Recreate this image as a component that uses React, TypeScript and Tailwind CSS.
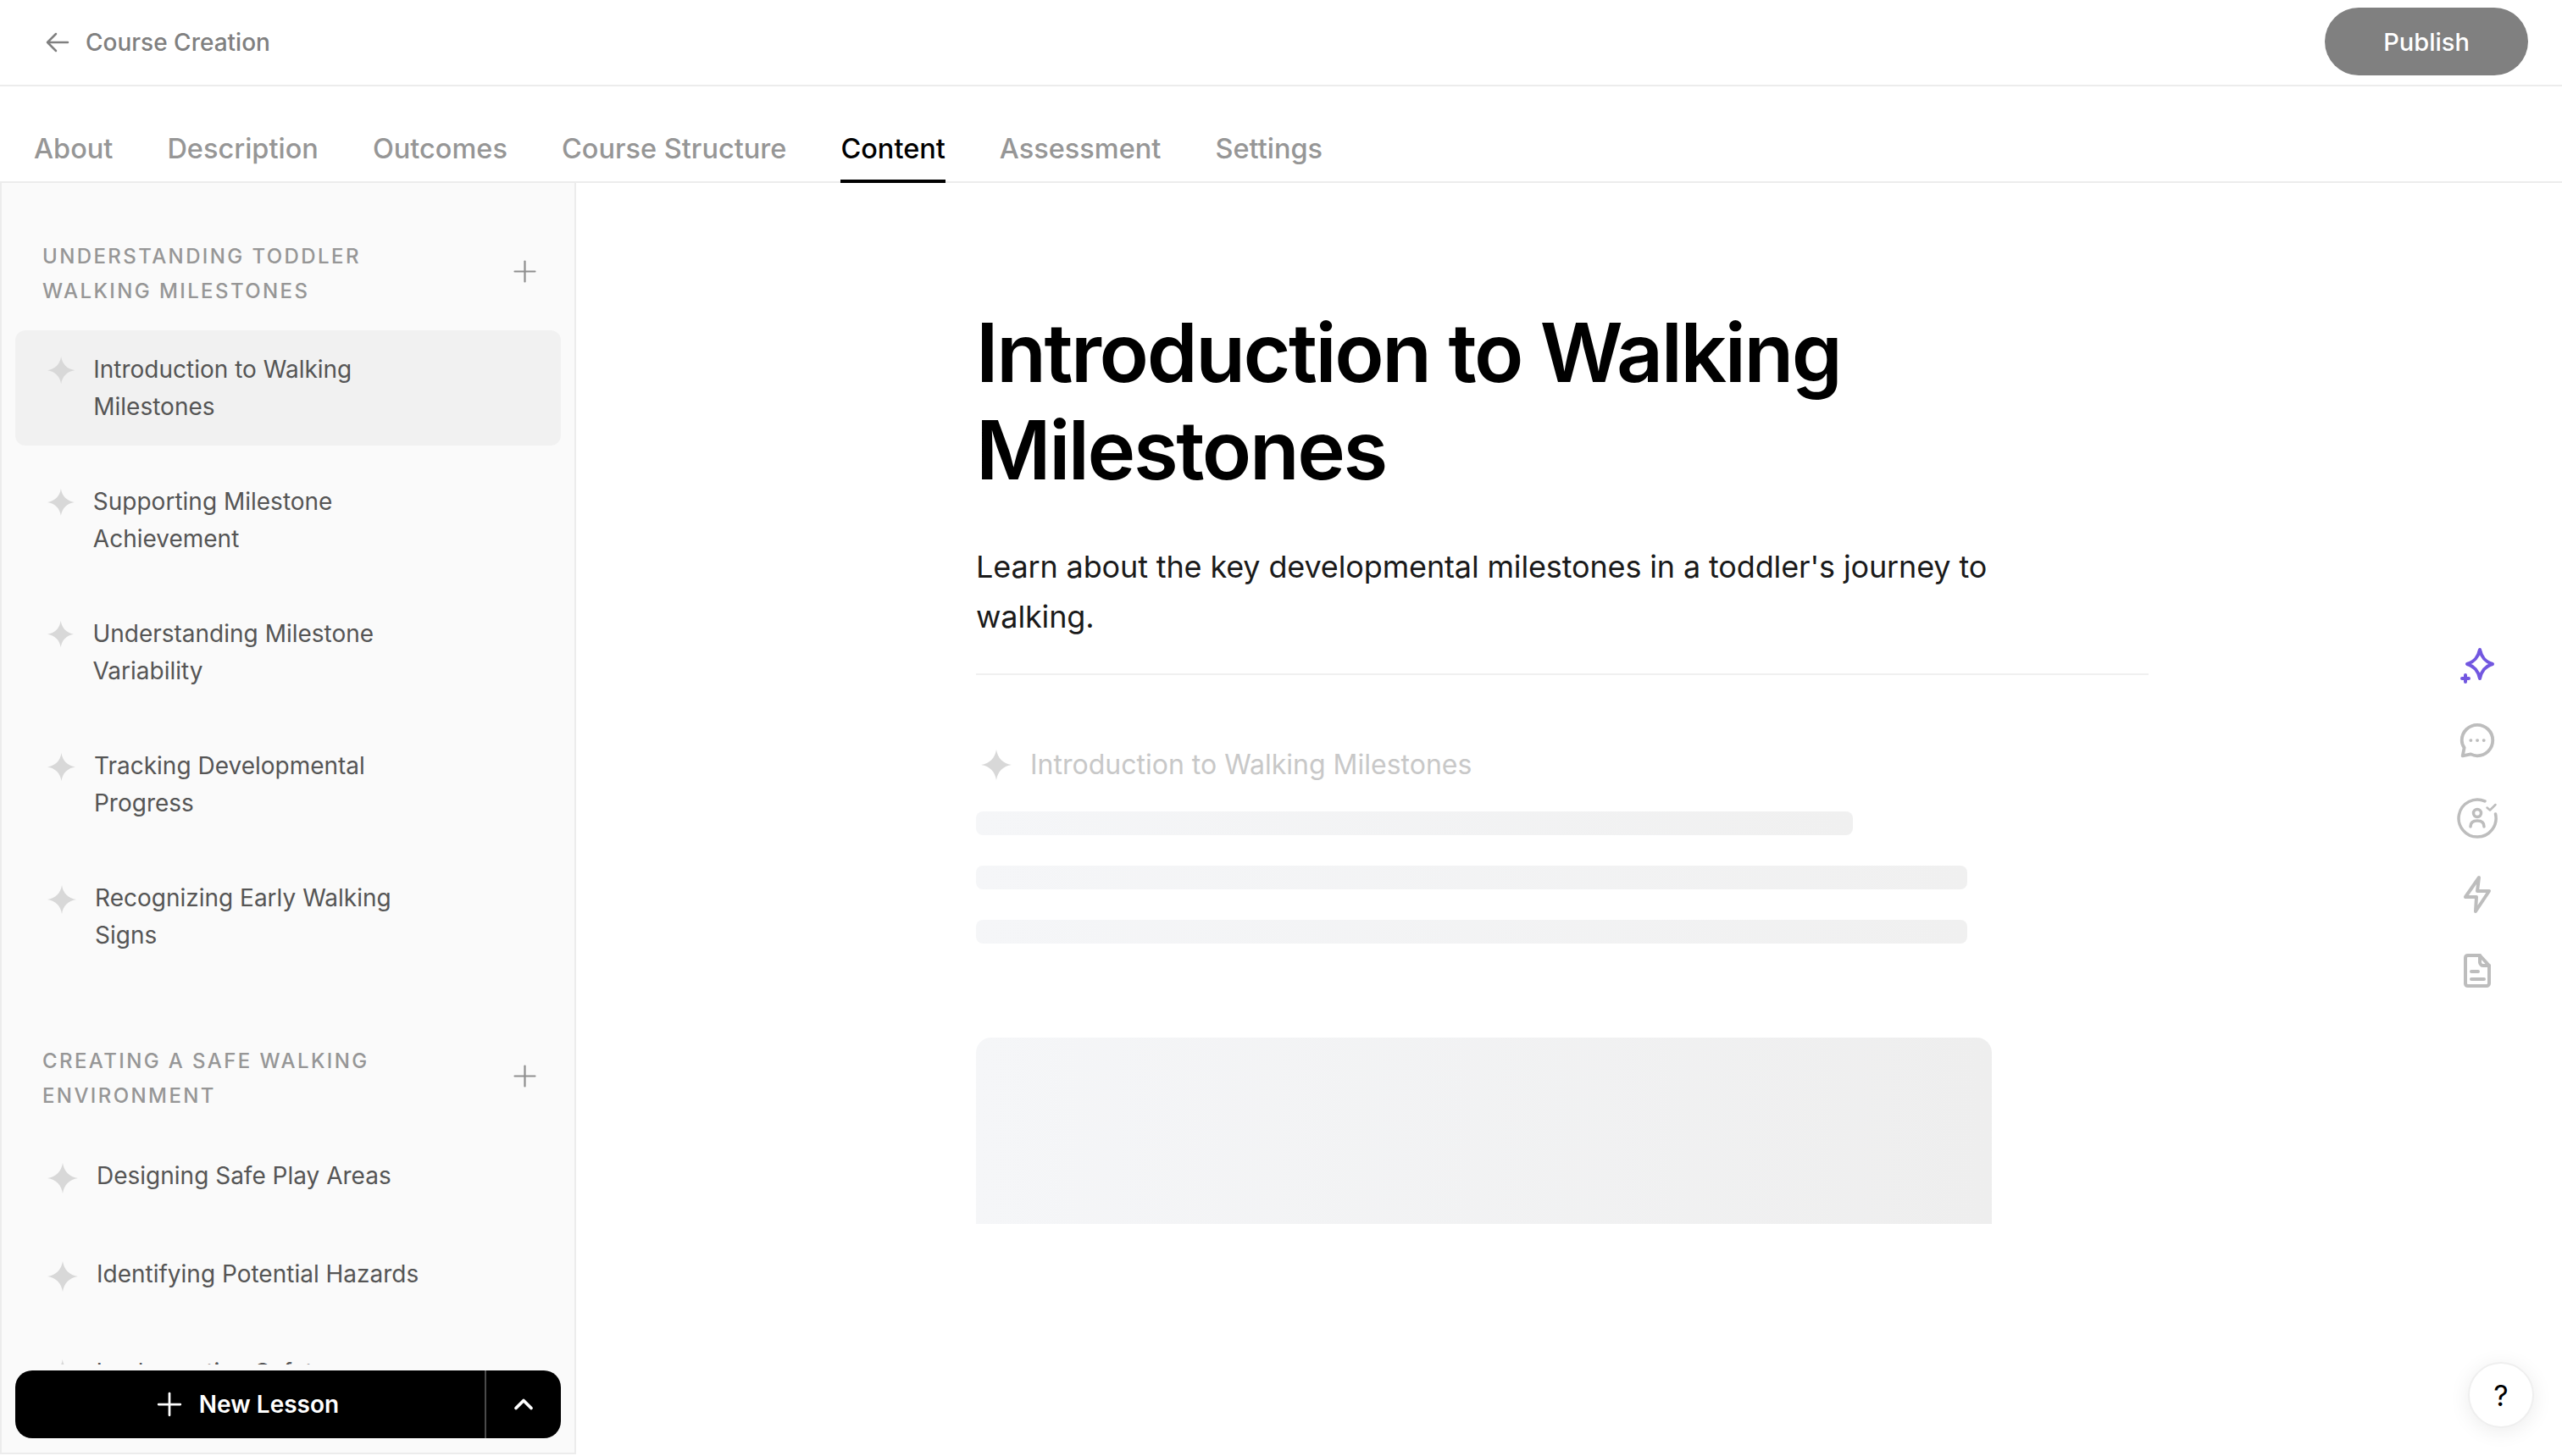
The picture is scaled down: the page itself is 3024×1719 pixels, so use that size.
import React from 'react';
import { Plus, ChevronUp } from 'lucide-react';

const tabs = ['About', 'Description', 'Outcomes', 'Course Structure', 'Content', 'Assessment', 'Settings'];

const sections = [
  {
    title: 'UNDERSTANDING TODDLER WALKING MILESTONES',
    lessons: [
      'Introduction to Walking Milestones',
      'Supporting Milestone Achievement',
      'Understanding Milestone Variability',
      'Tracking Developmental Progress',
      'Recognizing Early Walking Signs',
    ],
  },
  {
    title: 'CREATING A SAFE WALKING ENVIRONMENT',
    lessons: ['Designing Safe Play Areas', 'Identifying Potential Hazards', 'Implementing Safety Measures'],
  },
];

function Sparkle({ className }: { className?: string }) {
  return (
    <svg viewBox="0 0 36 36" className={className} fill="#d8d8d8">
      <path d="M18 0C19.500 10 26 16.500 36 18C26 19.500 19.500 26 18 36C16.500 26 10 19.500 0 18C10 16.500 16.500 10 18 0Z" />
    </svg>
  );
}

function LessonRow({ title, active }: { title: string; active: boolean }) {
  return (
    <div className={`flex items-start gap-[22px] rounded-[12px] pl-[38px] pr-[143px] py-[24px] ${active ? 'bg-[#f1f1f1]' : ''}`}>
      <Sparkle className="w-[36px] h-auto min-w-0 mt-[7px] mb-[5px]" />
      <div className="text-[28px] leading-[44px] text-[#555555]">{title}</div>
    </div>
  );
}

function RailIcons() {
  return (
    <div className="w-[200px] shrink-0 flex flex-col items-center justify-center gap-[42px] pb-[2px]">
      <svg viewBox="0 0 48 48" className="w-[48px] h-[48px]" fill="none" stroke="#7257e0" strokeWidth="4" strokeLinejoin="round" strokeLinecap="round">
        <path d="M27 5C29 14 33 19 42 22C33 25 29 30 27 39C25 30 21 25 12 22C21 19 25 14 27 5Z" />
        <path d="M10 35V43M6 39H14" />
      </svg>
      <svg viewBox="-1 1 50 50" className="w-[48px] h-[48px]" fill="none" stroke="#bdbdbd" strokeWidth="4" strokeLinecap="round" strokeLinejoin="round">
        <path d="M24 5C34 5 43 13 43 24C43 35 34 43 24 43C21 43 18.500 42.300 16 41L6 43L8 33C6 30.500 5 27.500 5 24C5 13 14 5 24 5Z" />
        <path d="M16 24H16.100M24 24H24.100M32 24H32.100" />
      </svg>
      <svg viewBox="0 0 48 48" className="w-[48px] h-[48px]" fill="none" stroke="#bdbdbd" strokeWidth="3.500" strokeLinecap="round" strokeLinejoin="round">
        <path d="M33 3.900A22 22 0 1 0 45.500 19" />
        <circle cx="24" cy="18" r="4.500" />
        <path d="M16 34C16 29 19 27 24 27C29 27 32 29 32 34" />
        <path d="M35.500 11.500L39 14.500L45.500 8" strokeWidth="2.500" />
      </svg>
      <svg viewBox="0 0 48 48" className="w-[48px] h-[48px]" fill="none" stroke="#bdbdbd" strokeWidth="4" strokeLinecap="round" strokeLinejoin="round">
        <path d="M26 4L10 27H23L22 44L38 20H24L26 4Z" />
      </svg>
      <svg viewBox="0 0 48 48" className="w-[48px] h-[48px]" fill="none" stroke="#bdbdbd" strokeWidth="4" strokeLinecap="round" strokeLinejoin="round">
        <path d="M13 6H27L38 18V39C38 41 36.500 42 35 42H13C11 42 10 41 10 39V9C10 7 11 6 13 6Z" />
        <path d="M27 6V14C27 16 29 18 31 18H38" />
        <path d="M17 25H25M17 34H32" />
      </svg>
    </div>
  );
}

export default function App() {
  return (
    <div className="h-screen flex flex-col overflow-hidden bg-white pb-[2px] font-['Inter',sans-serif]">
      {/* Top bar */}
      <div className="h-[102px] shrink-0 flex items-center justify-between border-b-2 border-[#ececec] pl-[54px] pr-[40px]">
        <div className="flex items-center gap-[19px] text-[#808080]">
          <svg viewBox="0 0 28 24" className="w-[28px] h-[24px]" fill="none" stroke="currentColor" strokeWidth="2.500" strokeLinecap="round" strokeLinejoin="round">
            <path d="M26 12H2M12 2L2 12L12 22" />
          </svg>
          <span className="text-[28px] font-medium">Course Creation</span>
        </div>
        <button className="w-[240px] h-[80px] mb-[2px] pt-[2px] rounded-full bg-[#808080] text-white text-[29px] font-medium">Publish</button>
      </div>

      {/* Tabs */}
      <div className="h-[114px] shrink-0 flex items-end gap-[64px] border-b-2 border-[#ececec] pl-[40px]">
        {tabs.map((tab) => (
          <div
            key={tab}
            className={`pb-[16px] -mb-[2px] text-[32.5px] leading-[40px] font-medium border-b-4 ${
              tab === 'Content' ? 'text-black border-black' : 'text-[#969696] border-transparent'
            }`}
          >
            {tab}
          </div>
        ))}
      </div>

      <div className="flex-1 flex min-h-0">
        {/* Sidebar */}
        <div className="w-[680px] shrink-0 flex flex-col bg-[#fafafa] border-x-2 border-b-2 border-[#ececec]">
          <div className="flex-1 min-h-0 overflow-hidden px-[16px] pt-[66px]">
            {sections.map((section, i) => (
              <div key={section.title} className={i > 0 ? 'mt-[82px]' : ''}>
                <div className={`flex items-center justify-between pl-[32px] pr-[22px] ${i > 0 ? 'mb-[28px]' : 'mb-[26px]'}`}>
                  <div className="w-[440px] text-[24px] leading-[41px] tracking-[0.1em] font-medium text-[#969696]">{section.title}</div>
                  <Plus className="w-[41px] h-[41px] -mt-[6px] text-[#8f8f8f]" strokeWidth={1.300} />
                </div>
                <div className="flex flex-col gap-[20px]">
                  {section.lessons.map((lesson) => (
                    <LessonRow key={lesson} title={lesson} active={lesson === 'Introduction to Walking Milestones'} />
                  ))}
                </div>
              </div>
            ))}
          </div>

          <div className="h-[104px] shrink-0 px-[16px] pt-[7px]">
            <div className="h-[80px] flex rounded-[20px] bg-black text-white">
              <div className="flex-1 flex items-center justify-center gap-[13px] pr-[12px] border-r-2 border-[#4a4a4a]">
                <Plus className="w-[44px] h-[44px]" strokeWidth={1.500} />
                <span className="text-[28px] font-semibold">New Lesson</span>
              </div>
              <div className="w-[88px] flex items-center justify-center">
                <ChevronUp className="w-[36px] h-[36px]" strokeWidth={2.500} />
              </div>
            </div>
          </div>
        </div>

        {/* Main */}
        <div className="relative flex-1 flex min-w-0">
          <div className="flex-1 pl-[472px] pt-[143px]">
            <div className="w-[1384px]">
              <h1 className="text-[96px] leading-[115px] font-semibold text-black tracking-[-0.025em]">
                Introduction to Walking Milestones
              </h1>
              <p className="mt-[51px] w-[1240px] text-[36px] leading-[59px] tracking-[-0.14px] text-[#1a1a1a]">
                Learn about the key developmental milestones in a toddler's journey to walking.
              </p>
              <div className="mt-[37px] border-t-2 border-[#f0f0f0]" />

              <div className="mt-[86px] flex items-center gap-[22px] pl-[6px] text-[32px] leading-[40px] text-[#c8c8c8]">
                <Sparkle className="w-[36px] h-[36px]" />
                <span>Introduction to Walking Milestones</span>
              </div>
              <div className="mt-[35px] flex flex-col gap-[36px]">
                <div className="w-[1035px] h-[28px] rounded-[8px] bg-gradient-to-r from-[#f5f6f8] to-[#f0f0f0]" />
                <div className="w-[1170px] h-[28px] rounded-[8px] bg-gradient-to-r from-[#f5f6f8] to-[#f0f0f0]" />
                <div className="w-[1170px] h-[28px] rounded-[8px] bg-gradient-to-r from-[#f5f6f8] to-[#f0f0f0]" />
              </div>
              <div className="mt-[111px] w-[1199px] h-[220px] rounded-t-[18px] bg-gradient-to-r from-[#f5f6f8] to-[#eeeeee]" />
            </div>
          </div>

          <RailIcons />

          <button className="absolute right-[33px] bottom-[31px] w-[78px] h-[78px] rounded-full bg-white border-2 border-[#efefef] shadow-[0_4px_24px_rgba(0,0,0,0.08)] text-[34px] text-black">
            ?
          </button>
        </div>
      </div>
    </div>
  );
}
